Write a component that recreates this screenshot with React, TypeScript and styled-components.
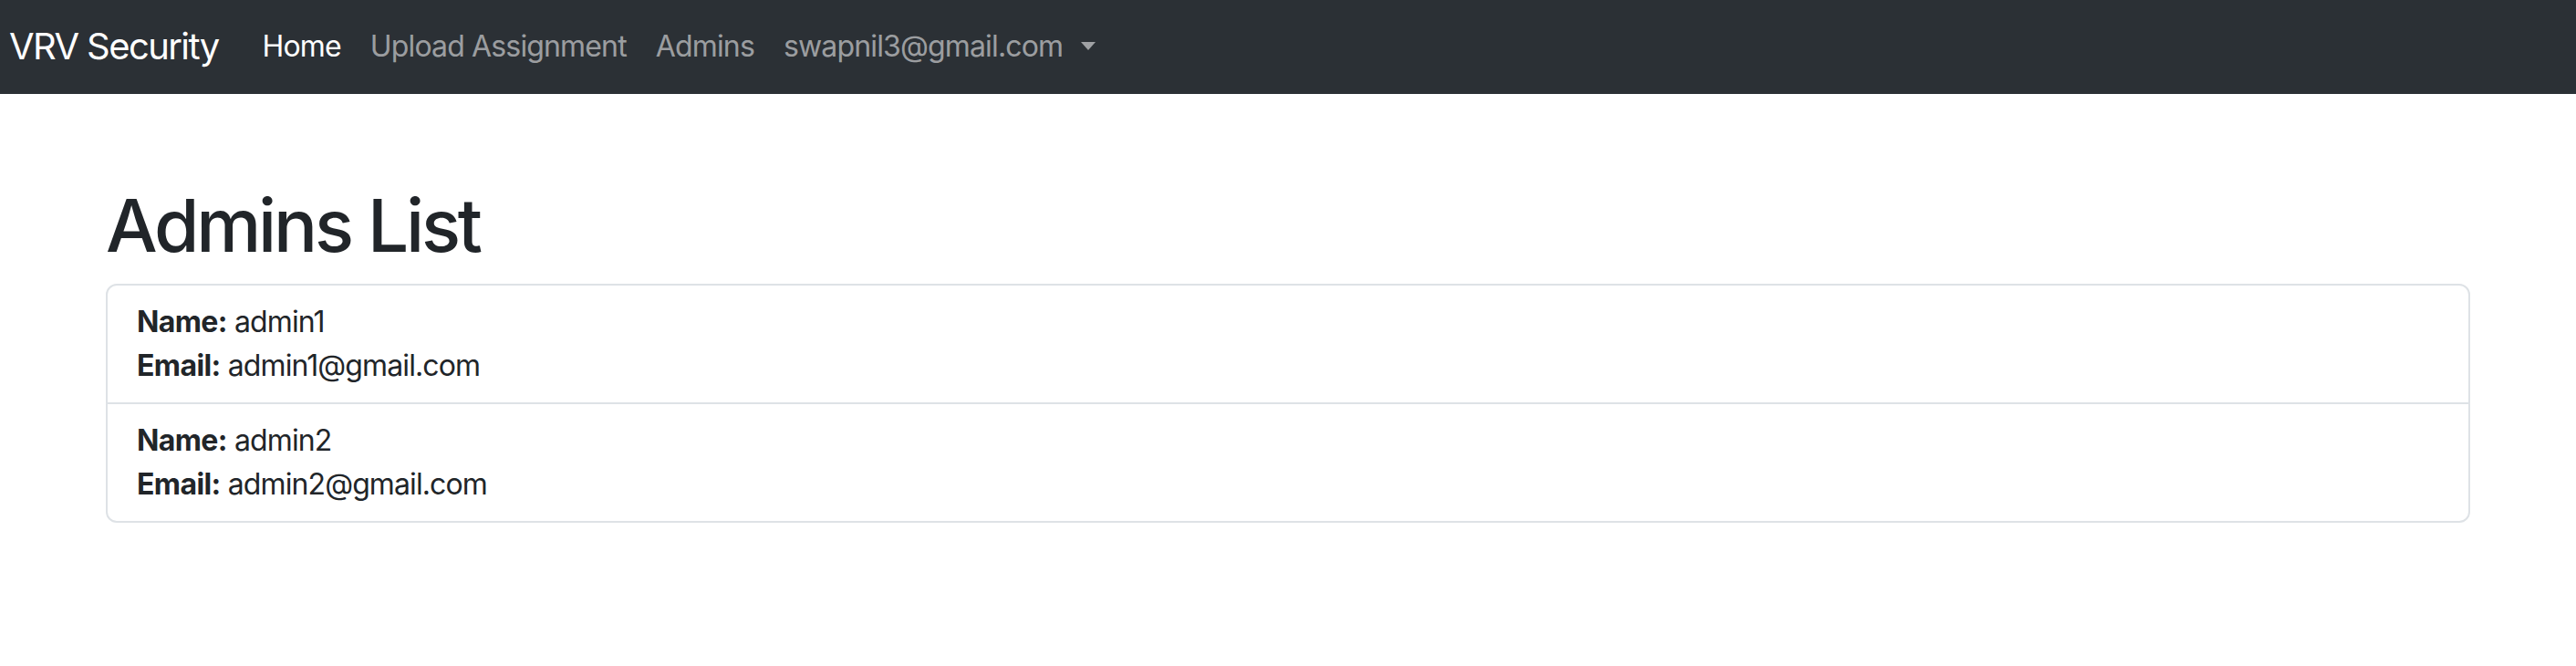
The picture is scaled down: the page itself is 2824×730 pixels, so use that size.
import React from "react";
import styled, { createGlobalStyle } from "styled-components";

const GlobalStyle = createGlobalStyle`
  html, body {
    margin: 0;
    padding: 0;
    background: #ffffff;
  }
  body {
    font-family: Inter, "Noto Sans", "Liberation Sans", sans-serif;
    color: #212529;
    -webkit-font-smoothing: antialiased;
  }
  * { box-sizing: border-box; }
`;

const NavBar = styled.nav`
  height: 103px;
  background: #2b3035;
  display: flex;
  align-items: center;
  padding: 0 10px 2px;
`;

const Brand = styled.a`
  font-size: 40px;
  line-height: 60px;
  color: #ffffff;
  text-decoration: none;
  margin-right: 32px;
  letter-spacing: -1.6px;
  white-space: nowrap;
`;

const NavList = styled.ul`
  display: flex;
  align-items: center;
  list-style: none;
  margin: 0;
  padding: 0;
`;

const NavLink = styled.a<{ $active?: boolean }>`
  display: flex;
  align-items: center;
  padding: 16px;
  font-size: 32px;
  line-height: 48px;
  letter-spacing: -0.85px;
  color: ${(p) => (p.$active ? "#ffffff" : "rgba(255, 255, 255, 0.55)")};
  text-decoration: none;
  white-space: nowrap;
`;

const Caret = styled.span`
  display: inline-block;
  margin-left: 20px;
  width: 0;
  height: 0;
  border-top: 9px solid rgba(255, 255, 255, 0.55);
  border-left: 8px solid transparent;
  border-right: 8px solid transparent;
`;

const Main = styled.main`
  width: 2640px;
  margin: 96px auto 0;
  padding: 0 24px;
`;

const Title = styled.h1`
  font-size: 80px;
  line-height: 96px;
  font-weight: 500;
  margin: 0 0 16px;
  letter-spacing: -3.2px;
`;

const List = styled.ul`
  list-style: none;
  margin: 0;
  padding: 0;
  border: 2px solid #dee2e6;
  border-radius: 12px;
`;

const Item = styled.li`
  padding: 16px 32px;
  font-size: 32px;
  line-height: 48px;
  letter-spacing: -0.9px;
  & + & {
    border-top: 2px solid #dee2e6;
  }
`;

const Line = styled.div``;

const Label = styled.strong`
  font-weight: 700;
  letter-spacing: -0.6px;
`;

const admins = [
  { name: "admin1", email: "admin1@gmail.com" },
  { name: "admin2", email: "admin2@gmail.com" },
];

export default function App() {
  return (
    <>
      <GlobalStyle />
      <NavBar>
        <Brand href="#">VRV Security</Brand>
        <NavList>
          <li><NavLink $active href="#">Home</NavLink></li>
          <li><NavLink href="#">Upload Assignment</NavLink></li>
          <li><NavLink href="#">Admins</NavLink></li>
          <li>
            <NavLink href="#">
              swapnil3@gmail.com
              <Caret />
            </NavLink>
          </li>
        </NavList>
      </NavBar>
      <Main>
        <Title>Admins List</Title>
        <List>
          {admins.map((a) => (
            <Item key={a.name}>
              <Line><Label>Name:</Label> {a.name}</Line>
              <Line><Label>Email:</Label> {a.email}</Line>
            </Item>
          ))}
        </List>
      </Main>
    </>
  );
}
